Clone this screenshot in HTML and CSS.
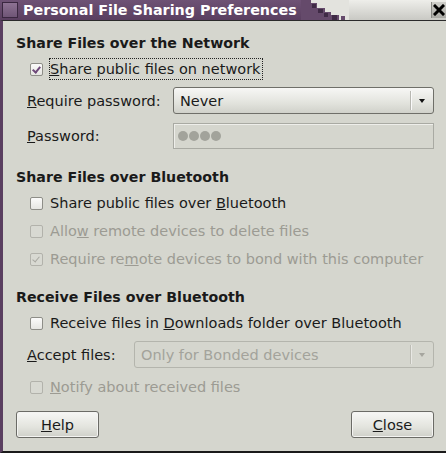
FILE: index.html
```html
<!DOCTYPE html>
<html>
<head>
<meta charset="utf-8">
<link rel="stylesheet" href="styles.css">
</head>
<body>
<div class="window">
  <div class="titlebar">
    <div class="tb-purple">
      <span class="tb-icon"></span>
      <span class="tb-title">Personal File Sharing Preferences</span>
      <svg class="tb-steps" width="48" height="20" viewBox="0 0 48 20">
        <rect x="0" y="0" width="48" height="20" fill="#e3e3de"/>
        <rect x="0" y="0" width="10" height="20" fill="#654a6b"/>
        <rect x="10" y="3" width="6" height="17" fill="#654a6b"/>
        <rect x="16" y="8" width="8" height="12" fill="#654a6b"/>
        <rect x="24" y="12" width="6" height="8" fill="#654a6b"/>
        <rect x="30" y="15" width="8" height="5" fill="#654a6b"/>
        <rect x="11" y="4" width="4" height="4" fill="#3f2a45"/>
        <rect x="17" y="9" width="5" height="4" fill="#3f2a45"/>
        <rect x="23" y="13" width="4" height="4" fill="#3f2a45"/>
        <rect x="31" y="15" width="5" height="5" fill="#3f2a45"/>
        <rect x="40" y="16" width="4" height="4" fill="#654a6b"/>
      </svg>
    </div>
    <div class="tb-light">
      <span class="tb-close">
        <svg width="12" height="12" viewBox="0 0 12 12"><path d="M2 2 L10 10 M10 2 L2 10" stroke="#000" stroke-width="3" stroke-linecap="square"/></svg>
      </span>
    </div>
  </div>
  <div class="content">
    <div class="heading">Share Files over the Network</div>
    <div class="row check">
      <span class="cb checked"></span>
      <span class="label focus"><u>S</u>hare public files on network</span>
    </div>
    <div class="row field">
      <span class="flabel w1"><u>R</u>equire password:</span>
      <div class="combo"><span class="combo-text">Never</span><span class="combo-sep"></span><span class="arrow"></span></div>
    </div>
    <div class="row field entryrow">
      <span class="flabel w1"><u>P</u>assword:</span>
      <div class="entry"><span class="dot"></span><span class="dot"></span><span class="dot"></span><span class="dot"></span></div>
    </div>

    <div class="heading h2">Share Files over Bluetooth</div>
    <div class="row check">
      <span class="cb"></span>
      <span class="label">Share public files over <u>B</u>luetooth</span>
    </div>
    <div class="row check disabled">
      <span class="cb"></span>
      <span class="label">Allo<u>w</u> remote devices to delete files</span>
    </div>
    <div class="row check disabled">
      <span class="cb checked"></span>
      <span class="label">Require re<u>m</u>ote devices to bond with this computer</span>
    </div>

    <div class="heading h3">Receive Files over Bluetooth</div>
    <div class="row check">
      <span class="cb"></span>
      <span class="label">Receive files in <u>D</u>ownloads folder over Bluetooth</span>
    </div>
    <div class="row field">
      <span class="flabel w2"><u>A</u>ccept files:</span>
      <div class="combo off"><span class="combo-text">Only for Bonded devices</span><span class="combo-sep"></span><span class="arrow"></span></div>
    </div>
    <div class="row check disabled notify">
      <span class="cb"></span>
      <span class="label"><u>N</u>otify about received files</span>
    </div>

    <div class="buttons">
      <button class="btn"><u>H</u>elp</button>
      <button class="btn"><u>C</u>lose</button>
    </div>
  </div>
</div>
</body>
</html>
```

FILE: styles.css
```css
html, body {
  margin: 0;
  padding: 0;
  background: #000;
}
body {
  width: 446px;
  height: 453px;
  overflow: hidden;
  font-family: "DejaVu Sans", sans-serif;
  font-size: 14.5px;
  color: #1a1a1a;
}
.window {
  width: 446px;
  height: 453px;
  display: flex;
  flex-direction: column;
}
.titlebar {
  height: 20px;
  display: flex;
  flex: none;
}
.tb-purple {
  display: flex;
  align-items: center;
  background: linear-gradient(#6e5275, #5a3f60);
  height: 20px;
}
.tb-icon {
  width: 14px;
  height: 14px;
  margin: 0 5px 0 2px;
  background: linear-gradient(#8d7293, #6f5576);
  border: 1px solid #3a2740;
  box-sizing: content-box;
}
.tb-title {
  color: #fff;
  font-weight: bold;
  font-size: 14.3px;
  padding-right: 4px;
}
.tb-steps {
  display: block;
}
.tb-light {
  flex: 1;
  display: flex;
  justify-content: flex-end;
  align-items: center;
  background: linear-gradient(#eeeeea, #c9c9c4);
}
.tb-close {
  width: 14px;
  height: 16px;
  display: flex;
  align-items: center;
  justify-content: center;
  background: linear-gradient(#cfcfca, #a9a9a4);
  border-left: 1px solid #8a8a86;
}
.content {
  flex: 1;
  background: #d5d6ce;
  border-left: 3px solid #5a3f60;
  border-top: 1px solid #2b2b2b;
  border-bottom: 2px solid #1a1a1a;
  padding: 13px 12px 0 13px;
  display: flex;
  flex-direction: column;
}
.heading {
  font-weight: bold;
  font-size: 14.2px;
  height: 18px;
  line-height: 18px;
}
.h2 { margin-top: 19px; }
.h3 { margin-top: 18px; }
.row {
  display: flex;
  align-items: center;
}
.check {
  height: 22px;
  margin-top: 6px;
  padding-left: 14px;
}
.cb {
  width: 11px;
  height: 11px;
  border: 1px solid #8e8e88;
  border-radius: 2px;
  background: linear-gradient(#fbfbfa, #e6e6e2);
  margin-right: 7px;
  position: relative;
  flex: none;
}
.cb.checked::after {
  content: "";
  position: absolute;
  left: 3px;
  top: 1px;
  width: 3px;
  height: 6px;
  border-right: 2px solid #6f4a7a;
  border-bottom: 2px solid #6f4a7a;
  transform: rotate(40deg);
}
.label {
  line-height: 18px;
  white-space: nowrap;
}
.label.focus {
  border: 1px dotted #222;
  padding: 1px 1px 1px 0;
  margin-left: -1px;
}
.disabled { color: #9c9b93; }
.disabled .cb {
  border-color: #b2b2ab;
  background: #d8d9d2;
}
.disabled .cb.checked::after {
  border-color: #a8a8a1;
  border-width: 0 1px 1px 0;
}
.field {
  margin-top: 7px;
  padding-left: 11px;
}
.entryrow { margin-top: 9px; }
.flabel { flex: none; white-space: nowrap; }
.w1 { width: 146px; }
.w2 { width: 107px; }
.combo {
  flex: 1;
  height: 25px;
  border: 1px solid #6f6f69;
  border-radius: 3px;
  background: linear-gradient(#f7f7f5, #e2e3dd 60%, #d0d1ca);
  display: flex;
  align-items: center;
  padding-left: 6px;
}
.combo-text { flex: 1; }
.combo-sep {
  width: 1px;
  height: 19px;
  background: #b8b8b2;
  border-right: 1px solid #fafafa;
  margin-right: 7px;
}
.arrow {
  width: 0;
  height: 0;
  border-left: 3px solid transparent;
  border-right: 3px solid transparent;
  border-top: 4px solid #111;
  margin-right: 8px;
}
.combo.off {
  background: #d5d6ce;
  border-color: #b4b5ad;
  color: #a3a39b;
}
.combo.off .combo-sep { background: #bdbdb5; border-right-color: #e8e8e4; }
.combo.off .arrow { border-top-color: #a6a69f; }
.entry {
  flex: 1;
  height: 24px;
  border: 1px solid #a9aaa3;
  box-shadow: inset 1px 1px 0 #eeeeea;
  background: #d5d6ce;
  display: flex;
  align-items: center;
  padding-left: 4px;
  gap: 1px;
}
.dot {
  width: 10px;
  height: 10px;
  border-radius: 50%;
  background: #a2a39b;
}
.notify { margin-top: 8px; }
.buttons {
  margin-top: 13px;
  display: flex;
  justify-content: space-between;
}
.btn {
  font-family: "DejaVu Sans", sans-serif;
  font-size: 14.5px;
  color: #1a1a1a;
  height: 27px;
  width: 83px;
  border: 1px solid #6b6b66;
  border-radius: 3px;
  background: linear-gradient(#f7f7f5, #e3e4de 60%, #cfd0c9);
  padding: 0;
  box-shadow: inset 0 0 0 1px #f4f4f2;
}
```
